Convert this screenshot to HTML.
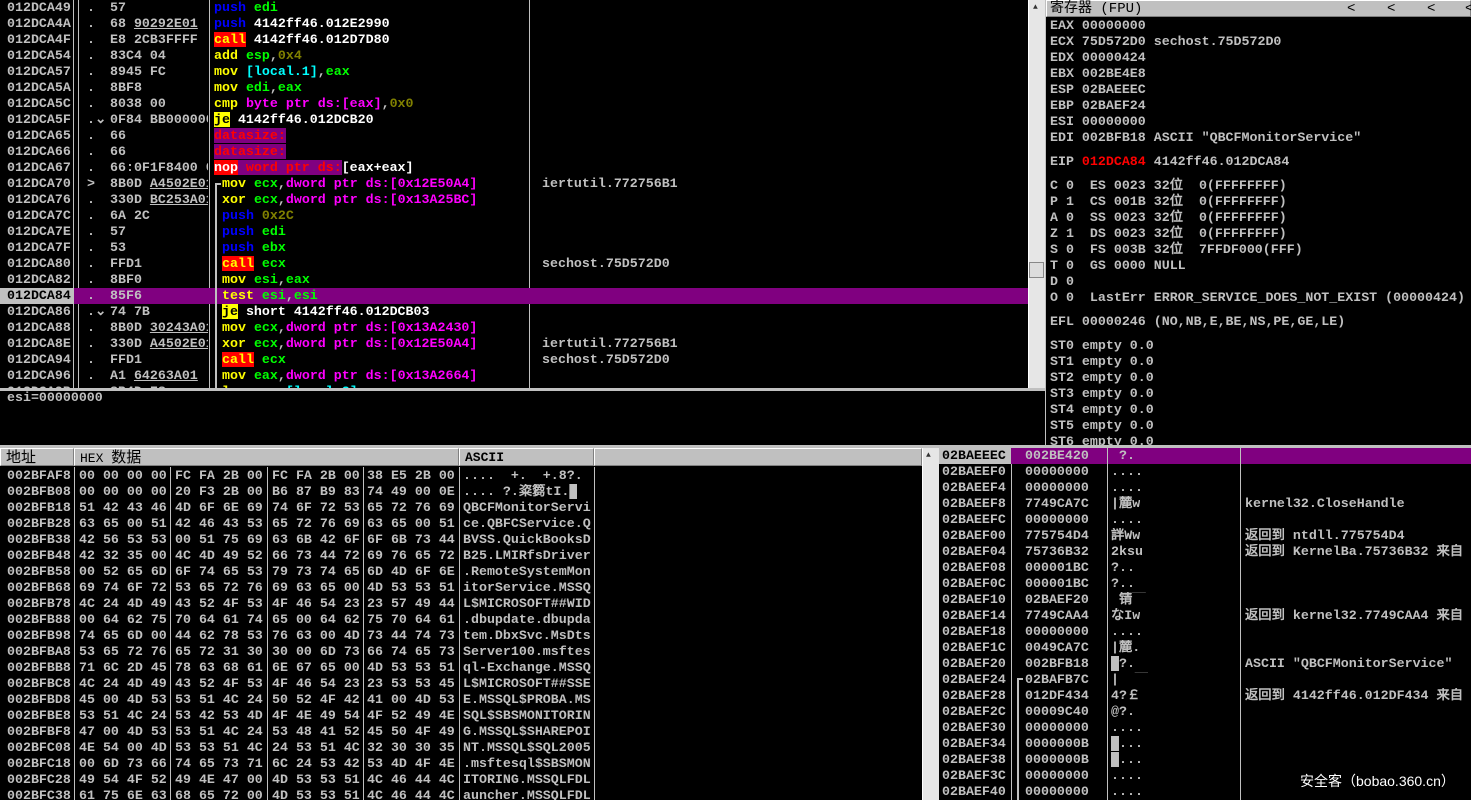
<!DOCTYPE html>
<html><head><meta charset="utf-8"><style>
*{box-sizing:border-box}
body{margin:0;background:#000;width:1471px;height:800px;overflow:hidden;position:relative;font:bold 13.3px "Liberation Mono","WenQuanYi Zen Hei",monospace;color:#c0c0c0}
.p{position:absolute;overflow:hidden}
.r{position:absolute;left:0;right:0;height:16px;line-height:16px;white-space:pre}
.r span.c{position:absolute;top:0;overflow:hidden;white-space:pre}
.vl{position:absolute;width:1px;background:#c0c0c0}
.b{color:#0000ff}.y{color:#ffff00}.g{color:#00ff00}.m{color:#ff00ff}.o{color:#808000}.cy{color:#00ffff}.w{color:#fff}
.call{background:#ff0000;color:#ffff00}
.je{background:#ffff00;color:#000}
.ds{background:#800080;color:#ff0000}
.nop{background:#ff0000;color:#fff}
.u{text-decoration:underline}
.hdr{position:absolute;background:#c0c0c0;color:#000;font-weight:normal;height:18px;line-height:18px;white-space:pre;border-right:1px solid #808080;border-bottom:1px solid #808080;border-top:1px solid #fff;border-left:1px solid #fff;padding-left:5px}
.sb{position:absolute;background:#e6e6e6;border-left:1px solid #fff}
</style></head><body>

<!-- DISASM -->
<div class="p" style="left:0;top:0;width:1028px;height:388px">
<div class="vl" style="left:73px;top:0;height:388px"></div>
<div class="vl" style="left:78px;top:0;height:388px"></div>
<div class="vl" style="left:209px;top:0;height:388px"></div>
<div class="vl" style="left:529px;top:0;height:388px"></div>
<div class="r" style="top:288px;left:74px;background:#800080"></div>
<div class="r" style="top:288px;width:73px;background:#c0c0c0"></div>
<div style="position:absolute;left:215px;top:183px;width:2px;height:210px;background:#c0c0c0"></div>
<div style="position:absolute;left:215px;top:183px;width:6px;height:2px;background:#c0c0c0"></div>

<div class="r" style="top:0"><span class="c" style="left:7px">012DCA49</span><span class="c" style="left:87px">.</span><span class="c" style="left:110px;width:98px">57</span><span class="c" style="left:214px"><span class="b">push</span> <span class="g">edi</span></span></div>
<div class="r" style="top:16px"><span class="c" style="left:7px">012DCA4A</span><span class="c" style="left:87px">.</span><span class="c" style="left:110px;width:98px">68 <span class="u">90292E01</span></span><span class="c" style="left:214px"><span class="b">push</span> <span class="w">4142ff46.012E2990</span></span></div>
<div class="r" style="top:32px"><span class="c" style="left:7px">012DCA4F</span><span class="c" style="left:87px">.</span><span class="c" style="left:110px;width:98px">E8 2CB3FFFF</span><span class="c" style="left:214px"><span class="call">call</span> <span class="w">4142ff46.012D7D80</span></span></div>
<div class="r" style="top:48px"><span class="c" style="left:7px">012DCA54</span><span class="c" style="left:87px">.</span><span class="c" style="left:110px;width:98px">83C4 04</span><span class="c" style="left:214px"><span class="y">add</span> <span class="g">esp</span>,<span class="o">0x4</span></span></div>
<div class="r" style="top:64px"><span class="c" style="left:7px">012DCA57</span><span class="c" style="left:87px">.</span><span class="c" style="left:110px;width:98px">8945 FC</span><span class="c" style="left:214px"><span class="y">mov</span> <span class="cy">[local.1]</span>,<span class="g">eax</span></span></div>
<div class="r" style="top:80px"><span class="c" style="left:7px">012DCA5A</span><span class="c" style="left:87px">.</span><span class="c" style="left:110px;width:98px">8BF8</span><span class="c" style="left:214px"><span class="y">mov</span> <span class="g">edi</span>,<span class="g">eax</span></span></div>
<div class="r" style="top:96px"><span class="c" style="left:7px">012DCA5C</span><span class="c" style="left:87px">.</span><span class="c" style="left:110px;width:98px">8038 00</span><span class="c" style="left:214px"><span class="y">cmp</span> <span class="m">byte ptr ds:[eax]</span>,<span class="o">0x0</span></span></div>
<div class="r" style="top:112px"><span class="c" style="left:7px">012DCA5F</span><span class="c" style="left:87px">.⌄</span><span class="c" style="left:110px;width:98px">0F84 BB000000</span><span class="c" style="left:214px"><span class="je">je</span> <span class="w">4142ff46.012DCB20</span></span></div>
<div class="r" style="top:128px"><span class="c" style="left:7px">012DCA65</span><span class="c" style="left:87px">.</span><span class="c" style="left:110px;width:98px">66</span><span class="c" style="left:214px"><span class="ds">datasize:</span></span></div>
<div class="r" style="top:144px"><span class="c" style="left:7px">012DCA66</span><span class="c" style="left:87px">.</span><span class="c" style="left:110px;width:98px">66</span><span class="c" style="left:214px"><span class="ds">datasize:</span></span></div>
<div class="r" style="top:160px"><span class="c" style="left:7px">012DCA67</span><span class="c" style="left:87px">.</span><span class="c" style="left:110px;width:98px">66:0F1F8400 00</span><span class="c" style="left:214px"><span class="nop">nop</span><span class="ds"> word ptr ds:</span><span class="w">[eax+eax]</span></span></div>
<div class="r" style="top:176px"><span class="c" style="left:7px">012DCA70</span><span class="c" style="left:87px">&gt;</span><span class="c" style="left:110px;width:98px">8B0D <span class="u">A4502E01</span></span><span class="c" style="left:222px"><span class="y">mov</span> <span class="g">ecx</span>,<span class="m">dword ptr ds:[0x12E50A4]</span></span><span class="c" style="left:542px">iertutil.772756B1</span></div>
<div class="r" style="top:192px"><span class="c" style="left:7px">012DCA76</span><span class="c" style="left:87px">.</span><span class="c" style="left:110px;width:98px">330D <span class="u">BC253A01</span></span><span class="c" style="left:222px"><span class="y">xor</span> <span class="g">ecx</span>,<span class="m">dword ptr ds:[0x13A25BC]</span></span></div>
<div class="r" style="top:208px"><span class="c" style="left:7px">012DCA7C</span><span class="c" style="left:87px">.</span><span class="c" style="left:110px;width:98px">6A 2C</span><span class="c" style="left:222px"><span class="b">push</span> <span class="o">0x2C</span></span></div>
<div class="r" style="top:224px"><span class="c" style="left:7px">012DCA7E</span><span class="c" style="left:87px">.</span><span class="c" style="left:110px;width:98px">57</span><span class="c" style="left:222px"><span class="b">push</span> <span class="g">edi</span></span></div>
<div class="r" style="top:240px"><span class="c" style="left:7px">012DCA7F</span><span class="c" style="left:87px">.</span><span class="c" style="left:110px;width:98px">53</span><span class="c" style="left:222px"><span class="b">push</span> <span class="g">ebx</span></span></div>
<div class="r" style="top:256px"><span class="c" style="left:7px">012DCA80</span><span class="c" style="left:87px">.</span><span class="c" style="left:110px;width:98px">FFD1</span><span class="c" style="left:222px"><span class="call">call</span> <span class="g">ecx</span></span><span class="c" style="left:542px">sechost.75D572D0</span></div>
<div class="r" style="top:272px"><span class="c" style="left:7px">012DCA82</span><span class="c" style="left:87px">.</span><span class="c" style="left:110px;width:98px">8BF0</span><span class="c" style="left:222px"><span class="y">mov</span> <span class="g">esi</span>,<span class="g">eax</span></span></div>
<div class="r" style="top:288px"><span class="c" style="left:7px;color:#000">012DCA84</span><span class="c" style="left:87px">.</span><span class="c" style="left:110px;width:98px">85F6</span><span class="c" style="left:222px"><span class="y">test</span> <span class="g">esi</span>,<span class="g">esi</span></span></div>
<div class="r" style="top:304px"><span class="c" style="left:7px">012DCA86</span><span class="c" style="left:87px">.⌄</span><span class="c" style="left:110px;width:98px">74 7B</span><span class="c" style="left:222px"><span class="je">je</span> <span class="w">short 4142ff46.012DCB03</span></span></div>
<div class="r" style="top:320px"><span class="c" style="left:7px">012DCA88</span><span class="c" style="left:87px">.</span><span class="c" style="left:110px;width:98px">8B0D <span class="u">30243A01</span></span><span class="c" style="left:222px"><span class="y">mov</span> <span class="g">ecx</span>,<span class="m">dword ptr ds:[0x13A2430]</span></span></div>
<div class="r" style="top:336px"><span class="c" style="left:7px">012DCA8E</span><span class="c" style="left:87px">.</span><span class="c" style="left:110px;width:98px">330D <span class="u">A4502E01</span></span><span class="c" style="left:222px"><span class="y">xor</span> <span class="g">ecx</span>,<span class="m">dword ptr ds:[0x12E50A4]</span></span><span class="c" style="left:542px">iertutil.772756B1</span></div>
<div class="r" style="top:352px"><span class="c" style="left:7px">012DCA94</span><span class="c" style="left:87px">.</span><span class="c" style="left:110px;width:98px">FFD1</span><span class="c" style="left:222px"><span class="call">call</span> <span class="g">ecx</span></span><span class="c" style="left:542px">sechost.75D572D0</span></div>
<div class="r" style="top:368px"><span class="c" style="left:7px">012DCA96</span><span class="c" style="left:87px">.</span><span class="c" style="left:110px;width:98px">A1 <span class="u">64263A01</span></span><span class="c" style="left:222px"><span class="y">mov</span> <span class="g">eax</span>,<span class="m">dword ptr ds:[0x13A2664]</span></span></div>
<div class="r" style="top:384px"><span class="c" style="left:7px">012DCA9B</span><span class="c" style="left:87px">.</span><span class="c" style="left:110px;width:98px">8B4D F8</span><span class="c" style="left:222px"><span class="y">lea</span> <span class="g">ecx</span>,<span class="cy">[local.2]</span></span></div>
</div>
<div class="sb" style="left:1028px;top:0;width:17px;height:388px"></div>
<div style="position:absolute;left:1029px;top:262px;width:15px;height:16px;background:#ddd;border:1px solid #888"></div>
<div style="position:absolute;left:1033px;top:3px;font-size:8px;color:#333">▲</div>

<div style="position:absolute;left:0;top:388px;width:1045px;height:3px;background:#c0c0c0"></div>
<div style="position:absolute;left:1045px;top:0;width:1px;height:447px;background:#c0c0c0"></div>
<div style="position:absolute;left:0;top:445px;width:1471px;height:3px;background:#c0c0c0"></div>

<div class="r" style="top:390px;left:7px;width:300px">esi=00000000</div>

<div class="hdr" style="left:1046px;top:0;width:425px;height:17px;line-height:16px;font-family:'Liberation Mono','WenQuanYi Zen Hei',monospace;font-size:14px;padding-left:3px">寄存器 (FPU)<span style="position:absolute;left:300px">&lt;</span><span style="position:absolute;left:340px">&lt;</span><span style="position:absolute;left:380px">&lt;</span><span style="position:absolute;left:418px">&lt;</span></div>
<div class="p" style="left:1046px;top:17px;width:425px;height:428px">
<div class="r" style="top:1px;left:4px">EAX 00000000</div>
<div class="r" style="top:17px;left:4px">ECX 75D572D0 sechost.75D572D0</div>
<div class="r" style="top:33px;left:4px">EDX 00000424</div>
<div class="r" style="top:49px;left:4px">EBX 002BE4E8</div>
<div class="r" style="top:65px;left:4px">ESP 02BAEEEC</div>
<div class="r" style="top:81px;left:4px">EBP 02BAEF24</div>
<div class="r" style="top:97px;left:4px">ESI 00000000</div>
<div class="r" style="top:113px;left:4px">EDI 002BFB18 ASCII "QBCFMonitorService"</div>
<div class="r" style="top:137px;left:4px">EIP <span style="color:#ff0000">012DCA84</span> 4142ff46.012DCA84</div>
<div class="r" style="top:161px;left:4px">C 0  ES 0023 32位  0(FFFFFFFF)</div>
<div class="r" style="top:177px;left:4px">P 1  CS 001B 32位  0(FFFFFFFF)</div>
<div class="r" style="top:193px;left:4px">A 0  SS 0023 32位  0(FFFFFFFF)</div>
<div class="r" style="top:209px;left:4px">Z 1  DS 0023 32位  0(FFFFFFFF)</div>
<div class="r" style="top:225px;left:4px">S 0  FS 003B 32位  7FFDF000(FFF)</div>
<div class="r" style="top:241px;left:4px">T 0  GS 0000 NULL</div>
<div class="r" style="top:257px;left:4px">D 0</div>
<div class="r" style="top:273px;left:4px">O 0  LastErr ERROR_SERVICE_DOES_NOT_EXIST (00000424)</div>
<div class="r" style="top:297px;left:4px">EFL 00000246 (NO,NB,E,BE,NS,PE,GE,LE)</div>
<div class="r" style="top:321px;left:4px">ST0 empty 0.0</div>
<div class="r" style="top:337px;left:4px">ST1 empty 0.0</div>
<div class="r" style="top:353px;left:4px">ST2 empty 0.0</div>
<div class="r" style="top:369px;left:4px">ST3 empty 0.0</div>
<div class="r" style="top:385px;left:4px">ST4 empty 0.0</div>
<div class="r" style="top:401px;left:4px">ST5 empty 0.0</div>
<div class="r" style="top:417px;left:4px">ST6 empty 0.0</div>
</div>

<div class="hdr" style="left:0;top:448px;width:74px;font-family:'WenQuanYi Zen Hei',sans-serif;font-size:15px">地址</div>
<div class="hdr" style="left:74px;top:448px;width:385px;font-size:13px">HEX <span style="font-family:'WenQuanYi Zen Hei',sans-serif;font-size:15px">数据</span></div>
<div class="hdr" style="left:459px;top:448px;width:135px;font-size:13px;font-weight:bold">ASCII</div>
<div class="hdr" style="left:594px;top:448px;width:328px"></div>
<div class="p" style="left:0;top:467px;width:922px;height:333px">
<div class="vl" style="left:74px;top:0;height:333px"></div>
<div class="vl" style="left:170px;top:0;height:333px"></div>
<div class="vl" style="left:267px;top:0;height:333px"></div>
<div class="vl" style="left:363px;top:0;height:333px"></div>
<div class="vl" style="left:459px;top:0;height:333px"></div>
<div class="vl" style="left:594px;top:0;height:333px"></div>
<div id="dump"></div>
</div>

<div class="sb" style="left:922px;top:448px;width:17px;height:352px"></div>
<div style="position:absolute;left:926px;top:451px;font-size:8px;color:#333">▲</div>
<div class="p" style="left:939px;top:448px;width:532px;height:352px">
<div class="r" style="top:0;left:72px;background:#800080"></div>
<div class="r" style="top:0;width:72px;background:#c0c0c0"></div>
<div class="vl" style="left:72px;top:16px;height:340px"></div>
<div class="vl" style="left:168px;top:0;height:352px"></div>
<div class="vl" style="left:301px;top:0;height:352px"></div>
<div style="position:absolute;left:78px;top:230px;width:2px;height:130px;background:#c0c0c0"></div>
<div style="position:absolute;left:78px;top:230px;width:6px;height:2px;background:#c0c0c0"></div>
<div id="stk"></div>
</div>

<div style="position:absolute;left:1300px;top:771px;font:14px 'WenQuanYi Zen Hei','Liberation Sans',sans-serif;color:#fff">安全客（bobao.360.cn）</div>

<script>
var d=[
["002BFAF8","00 00 00 00","FC FA 2B 00","FC FA 2B 00","38 E5 2B 00","....  +.  +.8?."],
["002BFB08","00 00 00 00","20 F3 2B 00","B6 87 B9 83","74 49 00 0E",".... ?.粢篘tI.█"],
["002BFB18","51 42 43 46","4D 6F 6E 69","74 6F 72 53","65 72 76 69","QBCFMonitorServi"],
["002BFB28","63 65 00 51","42 46 43 53","65 72 76 69","63 65 00 51","ce.QBFCService.Q"],
["002BFB38","42 56 53 53","00 51 75 69","63 6B 42 6F","6F 6B 73 44","BVSS.QuickBooksD"],
["002BFB48","42 32 35 00","4C 4D 49 52","66 73 44 72","69 76 65 72","B25.LMIRfsDriver"],
["002BFB58","00 52 65 6D","6F 74 65 53","79 73 74 65","6D 4D 6F 6E",".RemoteSystemMon"],
["002BFB68","69 74 6F 72","53 65 72 76","69 63 65 00","4D 53 53 51","itorService.MSSQ"],
["002BFB78","4C 24 4D 49","43 52 4F 53","4F 46 54 23","23 57 49 44","L$MICROSOFT##WID"],
["002BFB88","00 64 62 75","70 64 61 74","65 00 64 62","75 70 64 61",".dbupdate.dbupda"],
["002BFB98","74 65 6D 00","44 62 78 53","76 63 00 4D","73 44 74 73","tem.DbxSvc.MsDts"],
["002BFBA8","53 65 72 76","65 72 31 30","30 00 6D 73","66 74 65 73","Server100.msftes"],
["002BFBB8","71 6C 2D 45","78 63 68 61","6E 67 65 00","4D 53 53 51","ql-Exchange.MSSQ"],
["002BFBC8","4C 24 4D 49","43 52 4F 53","4F 46 54 23","23 53 53 45","L$MICROSOFT##SSE"],
["002BFBD8","45 00 4D 53","53 51 4C 24","50 52 4F 42","41 00 4D 53","E.MSSQL$PROBA.MS"],
["002BFBE8","53 51 4C 24","53 42 53 4D","4F 4E 49 54","4F 52 49 4E","SQL$SBSMONITORIN"],
["002BFBF8","47 00 4D 53","53 51 4C 24","53 48 41 52","45 50 4F 49","G.MSSQL$SHAREPOI"],
["002BFC08","4E 54 00 4D","53 53 51 4C","24 53 51 4C","32 30 30 35","NT.MSSQL$SQL2005"],
["002BFC18","00 6D 73 66","74 65 73 71","6C 24 53 42","53 4D 4F 4E",".msftesql$SBSMON"],
["002BFC28","49 54 4F 52","49 4E 47 00","4D 53 53 51","4C 46 44 4C","ITORING.MSSQLFDL"],
["002BFC38","61 75 6E 63","68 65 72 00","4D 53 53 51","4C 46 44 4C","auncher.MSSQLFDL"]];
var h="",x=[7,79,175,272,367,463];
d.forEach(function(r,i){h+='<div class="r" style="top:'+(i*16+1)+'px">';r.forEach(function(c,j){h+='<span class="c" style="left:'+x[j]+'px">'+c.replace(/</g,"&lt;")+'</span>'});h+='</div>'});
document.getElementById("dump").innerHTML=h;
var s=[
["02BAEEEC","002BE420"," ?.",""],
["02BAEEF0","00000000","....",""],
["02BAEEF4","00000000","....",""],
["02BAEEF8","7749CA7C","|麓w","kernel32.CloseHandle"],
["02BAEEFC","00000000","....",""],
["02BAEF00","775754D4","詊Ww","返回到 ntdll.775754D4"],
["02BAEF04","75736B32","2ksu","返回到 KernelBa.75736B32 来自"],
["02BAEF08","000001BC","?..",""],
["02BAEF0C","000001BC","?..",""],
["02BAEF10","02BAEF20"," 锖￣",""],
["02BAEF14","7749CAA4","なIw","返回到 kernel32.7749CAA4 来自"],
["02BAEF18","00000000","....",""],
["02BAEF1C","0049CA7C","|麓.",""],
["02BAEF20","002BFB18","█?.","ASCII \"QBCFMonitorService\""],
["02BAEF24","02BAFB7C","|  ￣",""],
["02BAEF28","012DF434","4?￡","返回到 4142ff46.012DF434 来自"],
["02BAEF2C","00009C40","@?.",""],
["02BAEF30","00000000","....",""],
["02BAEF34","0000000B","█...",""],
["02BAEF38","0000000B","█...",""],
["02BAEF3C","00000000","....",""],
["02BAEF40","00000000","....",""]];
h="";
s.forEach(function(r,i){h+='<div class="r" style="top:'+(i*16)+'px">'+
'<span class="c" style="left:3px'+(i==0?';color:#000':'')+'">'+r[0]+'</span>'+
'<span class="c" style="left:86px">'+r[1]+'</span>'+
'<span class="c" style="left:172px">'+r[2]+'</span>'+
'<span class="c" style="left:306px">'+r[3]+'</span></div>'});
document.getElementById("stk").innerHTML=h;
</script>
</body></html>
